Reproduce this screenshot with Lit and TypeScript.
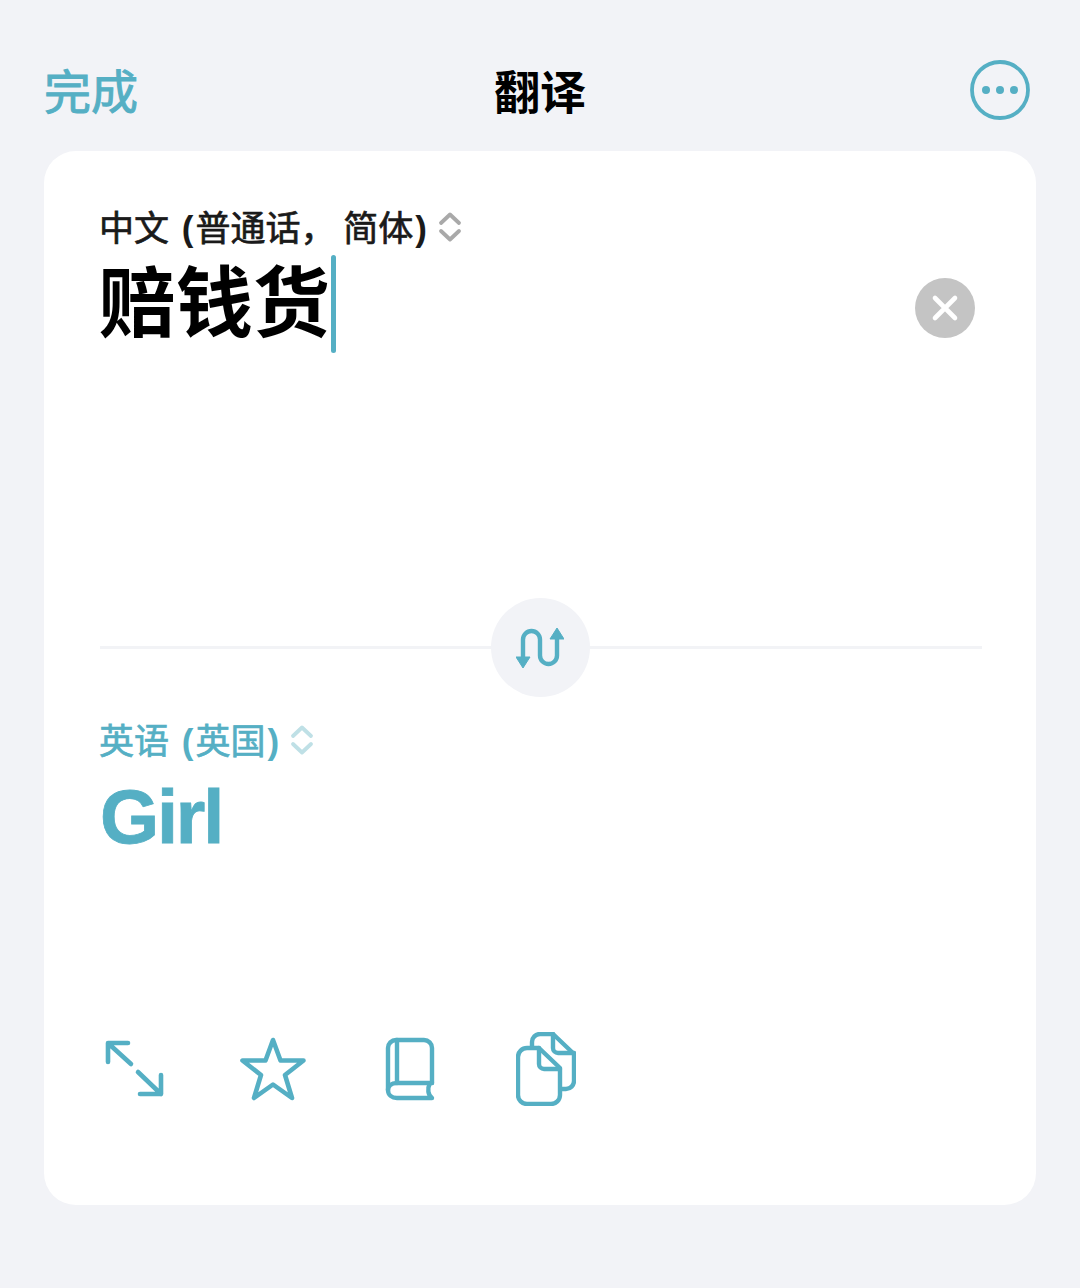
import { LitElement, html, css } from "lit";
import { customElement } from "lit/decorators.js";

const chev = html`<svg class="chev" width="24" height="32" viewBox="0 0 24 32" fill="none" stroke="currentColor" stroke-width="3.8" stroke-linecap="round" stroke-linejoin="round"><path d="M3 12 L12 3.5 L21 12"/><path d="M3 20 L12 28.5 L21 20"/></svg>`;

@customElement("app-root")
export class AppRoot extends LitElement {
  static styles = css`
    :host { display: block; width: 1080px; height: 1288px; background: #f2f3f7; overflow: hidden;
      font-family: "Liberation Sans", "Noto Sans CJK SC", sans-serif; color: #000; --teal: #55afc4; }
    .nav { height: 151px; box-sizing: border-box; padding: 58px 45px 0 45px; display: grid; grid-template-columns: 1fr auto 1fr; align-items: start; }
    .done { font: 400 47px/62px "Noto Sans CJK SC", sans-serif; -webkit-text-stroke: 1px var(--teal); color: var(--teal); margin-left: -1px; }
    .title { font: 700 46px/62px "Noto Sans CJK SC", sans-serif; }
    .more { justify-self: end; display: block; margin: 2px 5px 0 0; }
    .card { position: relative; margin: 0 44px; height: 1054px; background: #fff; border-radius: 32px; padding: 0 54px 0 56px; box-sizing: border-box; }
    .top { height: 498px; padding-top: 53px; box-sizing: border-box; border-bottom: 3px solid #f2f3f6; position: relative; }
    .lang { display: flex; align-items: center; gap: 10px; font: 400 35px/46px "Noto Sans CJK SC", sans-serif; height: 46px; margin-left: -1px; -webkit-text-stroke: 0.7px currentColor; }
    .lang .paren { font-family: "Liberation Sans", sans-serif; font-weight: 700; -webkit-text-stroke: 0; }
    .lang .open { margin: 0 2px 0 5px; }
    .lang .close { margin: 0 1px 0 2px; }
    .lang.src { color: #1a1a1a; }
    .lang.src .chev { color: #a9a9a9; }
    .lang.dst { color: var(--teal); }
    .lang.dst .chev { color: #bfe0e6; }
    .input { display: flex; align-items: flex-start; margin-top: 4px; }
    .source { font: 700 77px/88px "Noto Sans CJK SC", sans-serif; color: #000; margin-left: -1px; }
    .caret { width: 5px; height: 98px; background: var(--teal); border-radius: 3px; margin: 1px 0 0 1px; }
    .clear { position: absolute; right: 7px; top: 127px; display: block; }
    .swap { position: absolute; left: 447px; top: 447px; width: 99px; height: 99px; border-radius: 50%; background: #f2f3f7; display: flex; align-items: center; justify-content: center; }
    .swap svg { margin-left: -1px; }
    .bottom { padding-top: 68px; }
    .target { font: 700 76px/90px "Liberation Sans", sans-serif; color: var(--teal); letter-spacing: -2.2px; margin-top: 9px; -webkit-text-stroke: 0.8px var(--teal); }
    .tools { display: flex; align-items: center; margin-top: 167px; height: 80px; }
    .tools svg { display: block; flex: none; }
    .i-expand { margin-left: 5px; }
    .i-star { margin: 2px 0 0 74px; }
    .i-book { margin-left: 77px; }
    .i-docs { margin-left: 80px; }
  `;

  render() {
    return html`
      <div class="nav">
        <div class="done">完成</div>
        <div class="title">翻译</div>
        <svg class="more" width="60" height="60" viewBox="0 0 60 60">
          <circle cx="30" cy="30" r="28" fill="none" stroke="#55afc4" stroke-width="3.8"/>
          <circle cx="16" cy="30" r="4" fill="#55afc4"/><circle cx="30" cy="30" r="4" fill="#55afc4"/><circle cx="44" cy="30" r="4" fill="#55afc4"/>
        </svg>
      </div>
      <div class="card">
        <div class="top">
          <div class="lang src"><span>中文 <span class="paren open">(</span>普通话， 简体<span class="paren close">)</span></span>${chev}</div>
          <div class="input"><div class="source">赔钱货</div><div class="caret"></div></div>
          <svg class="clear" width="60" height="60" viewBox="0 0 60 60">
            <circle cx="30" cy="30" r="30" fill="#c4c4c4"/>
            <path d="M20 20 L40 40 M40 20 L20 40" stroke="#fff" stroke-width="4.6" stroke-linecap="round"/>
          </svg>
        </div>
        <div class="swap">
          <svg width="48" height="44" viewBox="0 0 48 44" fill="none">
            <path d="M7 33 V13.5 a8.5 8.5 0 0 1 17 0 V29.5 a8.5 8.5 0 0 0 17 0 V12" stroke="#55afc4" stroke-width="4.4" stroke-linecap="butt"/>
            <path d="M0 31 H14 L7 42 Z" stroke="#55afc4" stroke-width="1" stroke-linejoin="round" fill="#55afc4"/>
            <path d="M34 13 H48 L41 2 Z" stroke="#55afc4" stroke-width="1" stroke-linejoin="round" fill="#55afc4"/>
          </svg>
        </div>
        <div class="bottom">
          <div class="lang dst"><span>英语 <span class="paren open">(</span>英国<span class="paren close">)</span></span>${chev}</div>
          <div class="target">Girl</div>
          <div class="tools">
            <svg class="i-expand" width="60" height="60" viewBox="0 0 60 60" fill="none" stroke="#55afc4" stroke-width="4.6" stroke-linecap="round" stroke-linejoin="round">
              <path d="M3 23 V4 H23 M4 5 L26 25 M33 33 L56 55 M56 36 V55 H35"/>
            </svg>
            <svg class="i-star" width="68" height="66" viewBox="0 0 68 66" fill="none" stroke="#55afc4" stroke-width="4.6" stroke-linejoin="round">
              <path d="M34 3 L41.5 23.5 H64.5 L46 38 L53 61 L34 47.5 L15 61 L22 38 L3.5 23.5 H26.5 Z"/>
            </svg>
            <svg class="i-book" width="52" height="66" viewBox="0 0 52 66" fill="none" stroke="#55afc4" stroke-width="4.4" stroke-linecap="round" stroke-linejoin="round">
              <path d="M48 47 V12 a8 8 0 0 0 -8 -8 H12 a8 8 0 0 0 -8 8 V54"/>
              <path d="M13 4 V47"/>
              <path d="M48 47 H13 C7 47 4 50 4 54 C4 59 8 62 13 62 H48 C44 59 43 53 46 47"/>
            </svg>
            <svg class="i-docs" width="60" height="74" viewBox="0 0 60 74" fill="none" stroke="#55afc4" stroke-width="4.4" stroke-linecap="round" stroke-linejoin="round">
              <path d="M16 14 V10 a8 8 0 0 1 8 -8 H37 L58 22 V49 a8 8 0 0 1 -8 8 H46"/>
              <path d="M37 2 V16 a5 5 0 0 0 5 5 H58"/>
              <path d="M11 16 H23 L44 36 V63 a9 9 0 0 1 -9 9 H11 a9 9 0 0 1 -9 -9 V25 a9 9 0 0 1 9 -9 Z"/>
              <path d="M23 16 V32 a5 5 0 0 0 5 5 H44"/>
            </svg>
          </div>
        </div>
      </div>
    `;
  }
}
